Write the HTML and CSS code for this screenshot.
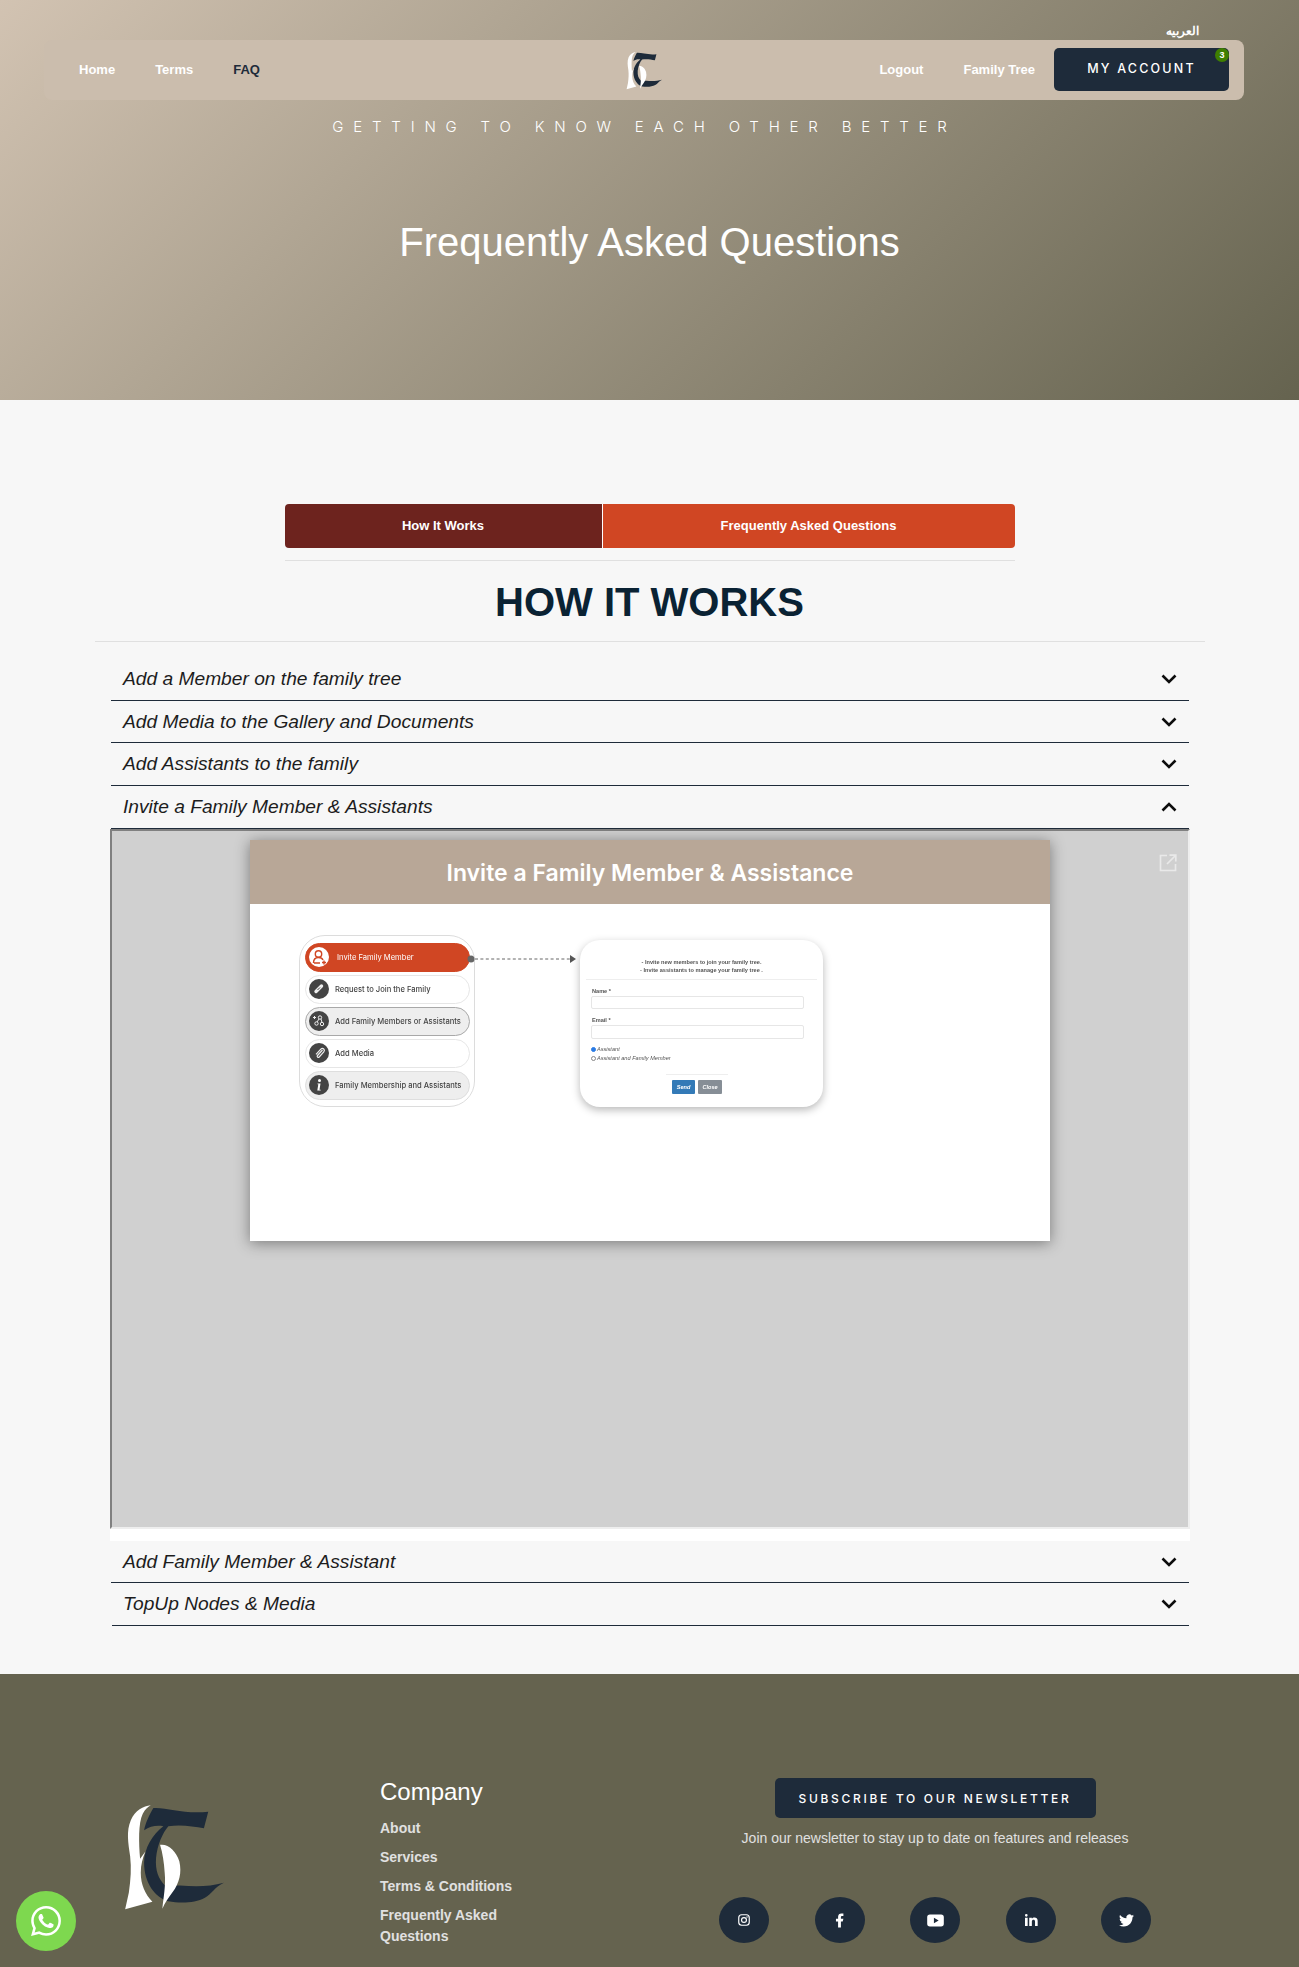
FILE: index.html
```html
<!DOCTYPE html>
<html lang="en">
<head>
<meta charset="utf-8">
<title>Frequently Asked Questions</title>
<link rel="stylesheet" href="styles.css">
</head>
<body>
<svg class="defs" width="0" height="0" aria-hidden="true">
  <defs>
    <symbol id="logo" viewBox="70 70 310 325">
      <path fill="#1e2b3a" d="M160 85C200 82 255 105 325 96L312 146C280 140 240 134 205 140C188 160 172 195 168 235C165 275 176 300 195 318L240 318C285 322 330 322 372 310C345 322 335 345 315 355C285 372 240 372 205 366C165 355 132 310 132 250C132 205 158 165 190 140C170 136 150 140 132 152C136 130 148 105 160 85Z"/>
      <path fill="#fff" d="M152 77C130 80 105 92 92 122C78 155 84 190 90 230C94 265 92 300 86 340L75 390L157 367C135 345 122 315 122 280C122 255 128 235 136 216L120 238C116 190 114 130 128 102C135 90 143 82 152 77Z"/>
      <path fill="#fff" d="M180 196C205 192 228 215 238 245C246 280 238 310 218 338C205 355 195 370 187 388C190 355 198 320 194 280C192 250 188 222 180 196Z"/>
    </symbol>
    <symbol id="chev" viewBox="0 0 16 10">
      <path d="M1.500 1.500L8 8l6.500-6.500" fill="none" stroke="#0d0d0d" stroke-width="2.600"/>
    </symbol>
  </defs>
</svg>

<header class="hero">
  <div class="lang"><a class="lang-link" href="#">العربيه</a></div>
  <nav class="nav">
    <div class="nav-side nav-left">
      <a class="nav-link" href="#">Home</a>
      <a class="nav-link" href="#">Terms</a>
      <a class="nav-link nav-active" href="#">FAQ</a>
    </div>
    <svg class="nav-logo"><use href="#logo"/></svg>
    <div class="nav-side nav-right">
      <a class="nav-link" href="#">Logout</a>
      <a class="nav-link nav-tree" href="#">Family Tree</a>
      <a class="account" href="#">MY ACCOUNT<span class="badge">3</span></a>
    </div>
  </nav>
  <p class="tagline">GETTING TO KNOW EACH OTHER BETTER</p>
  <h1 class="hero-title">Frequently Asked Questions</h1>
</header>

<main class="main">
  <div class="tabs">
    <a class="tab tab-left" href="#">How It Works</a>
    <a class="tab tab-right" href="#">Frequently Asked Questions</a>
  </div>
  <hr class="rule rule-tabs">
  <h2 class="section-title">HOW IT WORKS</h2>
  <hr class="rule rule-wide">

  <div class="accordion">
    <div class="acc-item"><span class="acc-label">Add a Member on the family tree</span><svg class="acc-chev"><use href="#chev"/></svg></div>
    <div class="acc-item acc-short"><span class="acc-label">Add Media to the Gallery and Documents</span><svg class="acc-chev"><use href="#chev"/></svg></div>
    <div class="acc-item"><span class="acc-label">Add Assistants to the family</span><svg class="acc-chev"><use href="#chev"/></svg></div>
    <div class="acc-item"><span class="acc-label">Invite a Family Member &amp; Assistants</span><svg class="acc-chev acc-up"><use href="#chev"/></svg></div>

    <div class="acc-panel">
      <div class="viewer">
        <svg class="popout" viewBox="0 0 18 18"><path d="M8 1.500H1.500v15h15V10M10.500 1.200h6.300v6.300M16.500 1.500L8 10" fill="none" stroke="#e9e9e9" stroke-width="1.700"/></svg>
        <article class="slide">
          <div class="slide-head">Invite a Family Member &amp; Assistance</div>
          <div class="slide-body">
            <div class="menu">
              <div class="pill pill-red">
                <span class="pill-ico ico-white"><svg viewBox="0 0 20 20"><circle cx="9.500" cy="7" r="3.200" fill="none" stroke="#d04623" stroke-width="1.400"/><path d="M4.500 16c0-4 2-5.500 5-5.500s4 1 4.500 2.500M5 16h6M13 15.500h4M15 13.500v4" fill="none" stroke="#d04623" stroke-width="1.400"/></svg></span>
                <span class="pill-text pill-text-first">Invite Family Member</span>
              </div>
              <div class="pill">
                <span class="pill-ico"><svg viewBox="0 0 20 20"><path d="M7 12.500l5.500-5.500" stroke="#eee" stroke-width="3.400" stroke-linecap="round" fill="none"/><path d="M8.500 11l2.500-2.500" stroke="#444" stroke-width="1" fill="none"/></svg></span>
                <span class="pill-text">Request to Join the Family</span>
              </div>
              <div class="pill pill-grey pill-strong">
                <span class="pill-ico"><svg viewBox="0 0 20 20"><circle cx="11" cy="6.500" r="1.700" fill="none" stroke="#eee"/><circle cx="7.500" cy="12.500" r="1.700" fill="none" stroke="#eee"/><circle cx="13" cy="13" r="1.700" fill="none" stroke="#eee"/><path d="M4 6.500h3M5.500 5v3M10 8l-2 3M12 8l1 3.500" stroke="#eee" fill="none"/></svg></span>
                <span class="pill-text">Add Family Members or Assistants</span>
              </div>
              <div class="pill">
                <span class="pill-ico"><svg viewBox="0 0 20 20"><path d="M13.500 7l-5 5.500c-1 1.200 .6 2.600 1.700 1.500l4.600-5.200c1.800-2-1-4.700-3-2.700l-4.800 5.300" fill="none" stroke="#eee" stroke-width="1.200"/></svg></span>
                <span class="pill-text">Add Media</span>
              </div>
              <div class="pill pill-grey">
                <span class="pill-ico"><svg viewBox="0 0 20 20"><circle cx="10.500" cy="5.500" r="1.500" fill="#fff"/><path d="M8.500 8.500h3l-1 6.200h1.200v.8H8.300l1-6.300h-.8z" fill="#fff"/></svg></span>
                <span class="pill-text">Family Membership and Assistants</span>
              </div>
            </div>

            <svg class="connector" viewBox="0 0 113 14">
              <circle cx="4" cy="7" r="3.500" fill="#666"/>
              <path d="M8 7h95" stroke="#666" stroke-width="1" stroke-dasharray="3 2.400" fill="none"/>
              <path d="M103 3l6 4-6 4z" fill="#555"/>
            </svg>

            <form class="mini-form">
              <p class="mini-intro">- Invite new members to join your family tree.<br>- Invite assistants to manage your family tree .</p>
              <div class="mini-rule"></div>
              <div class="mini-label">Name *</div>
              <div class="mini-input"></div>
              <div class="mini-label mini-label-2">Email *</div>
              <div class="mini-input mini-input-2"></div>
              <div class="mini-radio mini-radio-first"><span class="dot dot-on"></span>Assistant</div>
              <div class="mini-radio"><span class="dot"></span>Assistant and Family Member</div>
              <div class="mini-rule-short"></div>
              <div class="mini-btns"><span class="mini-btn mini-send">Send</span><span class="mini-btn mini-close">Close</span></div>
            </form>
          </div>
        </article>
      </div>
    </div>

    <div class="acc-item acc-after"><span class="acc-label">Add Family Member &amp; Assistant</span><svg class="acc-chev"><use href="#chev"/></svg></div>
    <div class="acc-item acc-last"><span class="acc-label">TopUp Nodes &amp; Media</span><svg class="acc-chev"><use href="#chev"/></svg></div>
  </div>
</main>

<footer class="footer">
  <div class="foot-logo-col"><svg class="foot-logo"><use href="#logo"/></svg></div>
  <div class="foot-company">
    <h3 class="foot-title">Company</h3>
    <a class="foot-link" href="#">About</a>
    <a class="foot-link" href="#">Services</a>
    <a class="foot-link" href="#">Terms &amp; Conditions</a>
    <a class="foot-link" href="#">Frequently Asked Questions</a>
  </div>
  <div class="foot-news">
    <a class="subscribe" href="#">SUBSCRIBE TO OUR NEWSLETTER</a>
    <p class="news-copy">Join our newsletter to stay up to date on features and releases</p>
    <div class="socials">
      <a class="social" href="#" aria-label="Instagram"><svg class="ico-insta" viewBox="0 0 24 24"><rect x="3" y="3" width="18" height="18" rx="5" fill="none" stroke="#fff" stroke-width="2"/><circle cx="12" cy="12" r="4.200" fill="none" stroke="#fff" stroke-width="2"/><circle cx="17.200" cy="6.800" r="1.200" fill="#fff"/></svg></a>
      <a class="social" href="#" aria-label="Facebook"><svg class="ico-fb" viewBox="0 0 24 24"><path fill="#fff" d="M14 13.500h2.500l1-4H14v-2c0-1.030 0-2 2-2h1.500V2.140c-.326-.043-1.557-.14-2.857-.14C11.928 2 10 3.657 10 6.700v2.800H7v4h3V22h4v-8.500z"/></svg></a>
      <a class="social" href="#" aria-label="YouTube"><svg class="ico-yt" viewBox="0 0 24 24"><path fill="#fff" fill-rule="evenodd" d="M5 4.500h14a3.500 3.500 0 0 1 3.500 3.500v8a3.500 3.500 0 0 1-3.500 3.500H5A3.500 3.500 0 0 1 1.500 16V8A3.500 3.500 0 0 1 5 4.500zM10 8.500v7l6-3.500z"/></svg></a>
      <a class="social" href="#" aria-label="LinkedIn"><svg class="ico-in" viewBox="0 0 24 24"><path fill="#fff" d="M6.940 5a2 2 0 1 1-4-.002 2 2 0 0 1 4 .002zM7 8.480H3V21h4V8.480zm6.320 0H9.340V21h3.940v-6.570c0-3.660 4.770-4 4.770 0V21H22v-7.930c0-6.170-7.060-5.940-8.720-2.910l.04-1.680z"/></svg></a>
      <a class="social" href="#" aria-label="Twitter"><svg class="ico-tw" viewBox="0 0 24 24"><path fill="#fff" d="M23.953 4.57a10 10 0 01-2.825.775 4.958 4.958 0 002.163-2.723c-.951.555-2.005.959-3.127 1.184a4.92 4.92 0 00-8.384 4.482C7.69 8.095 4.067 6.13 1.64 3.162a4.822 4.822 0 00-.666 2.475c0 1.71.87 3.213 2.188 4.096a4.904 4.904 0 01-2.228-.616v.06a4.923 4.923 0 003.946 4.827 4.996 4.996 0 01-2.212.085 4.936 4.936 0 004.604 3.417 9.867 9.867 0 01-6.102 2.105c-.39 0-.779-.023-1.17-.067a13.995 13.995 0 007.557 2.209c9.053 0 13.998-7.496 13.998-13.985 0-.21 0-.42-.015-.63A9.935 9.935 0 0024 4.59z"/></svg></a>
    </div>
  </div>
</footer>

<a class="whatsapp" href="#" aria-label="WhatsApp"><svg viewBox="0 0 24 24"><path fill="#fff" d="M17.472 14.382c-.297-.149-1.758-.867-2.03-.967-.273-.099-.471-.148-.67.15-.197.297-.767.966-.94 1.164-.173.199-.347.223-.644.075-.297-.15-1.255-.463-2.39-1.475-.883-.788-1.48-1.761-1.653-2.059-.173-.297-.018-.458.13-.606.134-.133.298-.347.446-.52.149-.174.198-.298.298-.497.099-.198.05-.371-.025-.52-.075-.149-.669-1.612-.916-2.207-.242-.579-.487-.5-.669-.51-.173-.008-.371-.01-.57-.01-.198 0-.52.074-.792.372-.272.297-1.04 1.016-1.04 2.479 0 1.462 1.065 2.875 1.213 3.074.149.198 2.096 3.2 5.077 4.487.709.306 1.262.489 1.694.625.712.227 1.36.195 1.871.118.571-.085 1.758-.719 2.006-1.413.248-.694.248-1.289.173-1.413-.074-.124-.272-.198-.57-.347m-5.421 7.403h-.004a9.87 9.87 0 01-5.031-1.378l-.361-.214-3.741.982.998-3.648-.235-.374a9.86 9.86 0 01-1.51-5.26c.001-5.45 4.436-9.884 9.888-9.884 2.64 0 5.122 1.03 6.988 2.898a9.825 9.825 0 012.893 6.994c-.003 5.45-4.437 9.884-9.885 9.884m8.413-18.297A11.815 11.815 0 0012.05 0C5.495 0 .16 5.335.157 11.892c0 2.096.547 4.142 1.588 5.945L.057 24l6.305-1.654a11.882 11.882 0 005.683 1.448h.005c6.554 0 11.89-5.335 11.893-11.893a11.821 11.821 0 00-3.48-8.413z"/></svg></a>
</body>
</html>
```
FILE: styles.css
```css
* { box-sizing: border-box; }
html, body { margin: 0; padding: 0; }
body {
  height: 1967px;
  overflow: hidden;
  background: #f7f7f7;
  font-family: "Liberation Sans", Arial, sans-serif;
  color: #1d1d1d;
}
a { text-decoration: none; color: inherit; }
.defs { position: absolute; }

/* hero */
.hero {
  height: 400px;
  padding-top: 20px;
  background: linear-gradient(135deg, #d2c3b2 0%, #65634f 100%);
}
.lang { height: 20px; padding-right: 100px; text-align: right; line-height: 20px; }
.lang-link { color: #fff; font-size: 12px; font-weight: 700; }
.nav {
  display: flex;
  align-items: center;
  width: 1200px;
  height: 60px;
  margin-left: 44px;
  padding: 0 15px;
  border-radius: 8px;
  background: #cbbdad;
}
.nav-side { flex: 1 1 0; display: flex; align-items: center; gap: 40px; }
.nav-left .nav-link:first-child { margin-left: 20px; }
.nav-right { justify-content: flex-end; }
.nav-link { color: #fff; font-size: 13px; font-weight: 700; line-height: 16px; }
.nav-active { color: #1e2b3a; }
.nav-tree { margin-right: -21px; }
.nav-logo { width: 37px; height: 39px; }
.account {
  position: relative;
  width: 175px;
  height: 43px;
  margin-top: -1px;
  border-radius: 5px;
  background: #1e2b3a;
  color: #fff;
  font-family: Inter, "Liberation Sans", sans-serif;
  font-size: 12.5px;
  font-weight: 500;
  letter-spacing: 2.2px;
  line-height: 42px;
  text-align: center;
}
.badge {
  position: absolute;
  top: 0;
  right: 0;
  width: 14px;
  height: 14px;
  border-radius: 50%;
  background: #3f7f00;
  color: #fff;
  font-family: "Liberation Sans", sans-serif;
  font-size: 9px;
  font-weight: 700;
  line-height: 14px;
  letter-spacing: 0;
}
.tagline {
  margin: 16px 0 0;
  padding: 1px 10px 0 0;
  color: #fff;
  font-family: Inter, "Liberation Sans", sans-serif;
  font-size: 15px;
  font-weight: 300;
  letter-spacing: 9.8px;
  line-height: 20px;
  text-align: center;
}
.hero-title {
  margin: 81px 0 0;
  color: #fff;
  font-size: 40px;
  font-weight: 400;
  line-height: 48px;
  text-align: center;
}

/* main */
.main { padding-top: 104px; height: 1274px; }
.tabs { display: flex; width: 730px; height: 44px; margin: 0 auto; border-radius: 4px; overflow: hidden; }
.tab { display: block; color: #fff; font-size: 13px; font-weight: 700; line-height: 43px; text-align: center; }
.tab-left { width: 318px; background: #6d231e; border-right: 1px solid #fff; }
.tab-right { flex: 1; background: #d04623; }
.rule { border: 0; height: 1px; margin: 0 auto; background: #e0e0e0; }
.rule-tabs { width: 730px; margin-top: 12px; }
.section-title {
  margin: 0;
  padding-top: 17px;
  color: #0a2233;
  font-size: 40px;
  font-weight: 700;
  line-height: 48px;
  text-align: center;
}
.rule-wide { width: 1110px; margin-top: 15px; }

.accordion { width: 1080px; margin: 16px 0 0 110px; }
.acc-item {
  display: flex;
  align-items: center;
  justify-content: space-between;
  height: 43px;
  margin: 0 1px;
  padding: 0 12px 0 12px;
  border-bottom: 1px solid #1e2b3a;
}
.acc-short { height: 42px; }
.acc-last { height: 43px; margin-left: 2px; padding-left: 11px; }
.acc-after { height: 42px; }
.acc-label { font-size: 19.2px; font-style: italic; line-height: 24px; color: #1d1d1d; }
.acc-chev { width: 16px; height: 10px; }
.acc-up { transform: rotate(180deg); }

.acc-panel { padding-bottom: 12px; background: #fff; }
.viewer {
  position: relative;
  height: 700px;
  padding: 9px 0 0 138px;
  background: #d0d0d0;
  border-style: solid;
  border-width: 2px;
  border-color: #808080 #eeeeee #eeeeee #808080;
}
.popout { position: absolute; top: 23px; right: 11px; width: 18px; height: 18px; }
.slide {
  width: 800px;
  height: 401px;
  background: #fff;
  box-shadow: 0 2px 14px rgba(0, 0, 0, .42);
}
.slide-head {
  height: 64px;
  background: #b8a797;
  color: #fff;
  font-family: Inter, "Liberation Sans", sans-serif;
  font-size: 23px;
  font-weight: 600;
  line-height: 66px;
  text-align: center;
}
.slide-body {
  display: flex;
  align-items: flex-start;
  padding: 31px 0 0 49px;
  filter: blur(.35px);
}
.menu {
  display: flex;
  flex-direction: column;
  gap: 3.5px;
  flex: none;
  width: 176px;
  height: 172px;
  padding: 7px 4px 7px 5px;
  border: 1.5px solid #dcdcdc;
  border-radius: 26px;
}
.pill {
  display: flex;
  align-items: center;
  flex: none;
  height: 28.5px;
  padding-left: 3px;
  border: 1px solid #e6e6e6;
  border-radius: 15px;
  background: #fff;
}
.pill-red { background: #d04623; border-color: #d04623; }
.pill-grey { background: #eeeeee; border-color: #dedede; }
.pill-strong { border-color: #a8a8a8; }
.pill-ico {
  flex: none;
  width: 20px;
  height: 20px;
  border-radius: 50%;
  background: #444;
}
.pill-ico svg { display: block; width: 20px; height: 20px; }
.ico-white { background: #fff; }
.pill-text {
  margin-left: 6px;
  color: #444;
  font-family: Inter, "Liberation Sans", sans-serif;
  font-size: 7.6px;
  font-weight: 500;
  white-space: nowrap;
}
.pill-text-first { margin-left: 8px; color: #fff; font-weight: 400; }
.connector {
  flex: none;
  width: 113px;
  height: 14px;
  margin: 17px 0 0 -8px;
}
.mini-form {
  flex: none;
  width: 243px;
  height: 167px;
  margin-top: 5px;
  padding: 18px 6px 0;
  border-radius: 20px;
  background: #fff;
  box-shadow: 0 3px 9px rgba(0, 0, 0, .28);
  font-size: 5.6px;
  color: #555;
}
.mini-intro { margin: 0; font-weight: 700; line-height: 8px; text-align: center; color: #555; }
.mini-rule { height: 1px; margin-top: 5px; background: #eee; }
.mini-label { margin: 8px 0 0 6px; font-weight: 700; line-height: 6px; }
.mini-label-2 { margin-top: 8px; }
.mini-input {
  width: 213px;
  height: 13px;
  margin: 2px 0 0 5px;
  border: 1px solid #e6e6e6;
  border-radius: 2px;
}
.mini-input-2 { height: 14px; }
.mini-radio { display: flex; align-items: center; gap: 1px; margin-left: 5px; font-style: italic; line-height: 9px; }
.mini-radio-first { margin-top: 6px; }
.dot { width: 5px; height: 5px; border: .5px solid #888; border-radius: 50%; }
.dot-on { background: #2a7be4; border-color: #2a7be4; }
.mini-rule-short { width: 62px; height: 1px; margin: 11px 0 0 80px; background: #eee; }
.mini-btns { display: flex; gap: 3px; margin: 5px 0 0 86px; }
.mini-btn { height: 14px; color: #fff; font-weight: 700; font-style: italic; line-height: 14px; text-align: center; border-radius: 1px; }
.mini-send { width: 23px; background: #337ab7; }
.mini-close { width: 24px; background: #868e96; }

/* footer */
.footer {
  display: flex;
  align-items: flex-start;
  height: 293px;
  padding: 104px 0 0 125px;
  background: #65634f;
}
.foot-logo-col { flex: none; width: 255px; padding-top: 25px; }
.foot-logo { display: block; width: 104px; height: 108px; margin-left: -2px; }
.foot-company { flex: none; width: 320px; }
.foot-title { margin: 0 0 12px; color: #fff; font-size: 24px; font-weight: 400; line-height: 28px; }
.foot-link { display: block; max-width: 170px; margin-bottom: 8px; color: #e0e0e0; font-size: 14px; font-weight: 700; line-height: 21px; }
.foot-news { display: flex; flex-direction: column; align-items: center; flex: none; width: 470px; }
.subscribe {
  width: 321px;
  height: 40px;
  border-radius: 5px;
  background: #1e2b3a;
  color: #fff;
  font-family: Inter, "Liberation Sans", sans-serif;
  font-size: 12px;
  font-weight: 500;
  letter-spacing: 2.7px;
  line-height: 41px;
  text-align: center;
}
.news-copy { margin: 10px 0 0; color: #e0e0e0; font-size: 14px; line-height: 20px; }
.socials { display: flex; gap: 45.5px; margin-top: 49px; }
.social {
  display: flex;
  align-items: center;
  justify-content: center;
  width: 50px;
  height: 46px;
  border-radius: 50%;
  background: #1e2b3a;
}
.ico-insta { width: 14px; height: 14px; }
.ico-fb { width: 17px; height: 17px; }
.ico-yt { width: 19px; height: 19px; }
.ico-in { width: 16px; height: 16px; }
.ico-tw { width: 15px; height: 15px; }

.whatsapp {
  position: fixed;
  left: 16px;
  bottom: 16px;
  display: flex;
  align-items: center;
  justify-content: center;
  width: 60px;
  height: 60px;
  border-radius: 50%;
  background: #7ed84f;
}
.whatsapp svg { width: 30px; height: 30px; }
```
